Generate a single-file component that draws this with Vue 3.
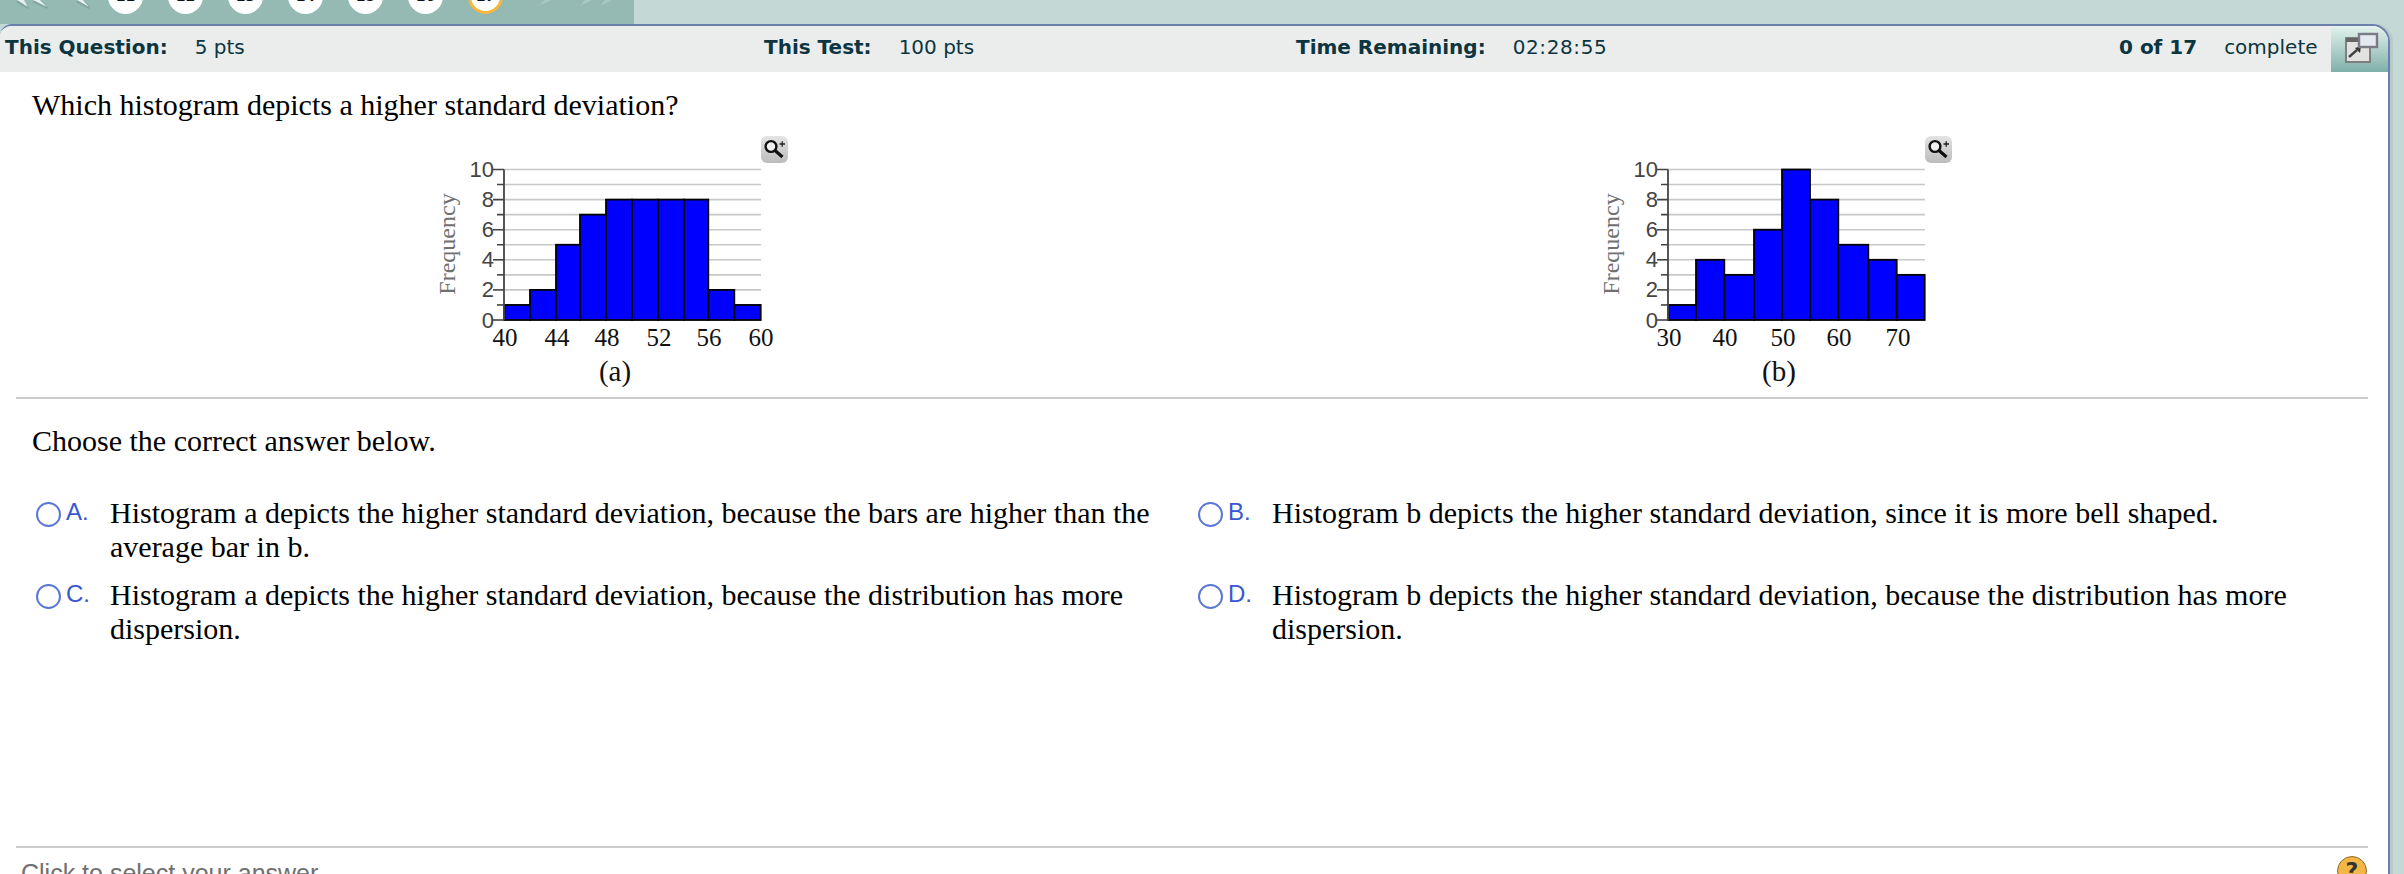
<script setup>
const tabs = [11, 12, 13, 14, 15, 16, 17]

const charts = [
  {
    letter: '(a)',
    letterX: 145,
    bars: [
      [34.3, 60, 1], [60, 86, 2], [86, 110, 5], [110, 136, 7], [136, 162, 8],
      [162, 188, 8], [188, 214, 8], [214, 238.3, 8], [238.3, 264.3, 2], [264.3, 290.7, 1]
    ],
    xLabels: [[35, '40'], [87, '44'], [137, '48'], [189, '52'], [239, '56'], [291, '60']]
  },
  {
    letter: '(b)',
    letterX: 145,
    bars: [
      [34.3, 62, 1], [62, 90.3, 4], [90.3, 120, 3], [120, 148, 6], [148, 176, 10],
      [176, 204.3, 8], [204.3, 234.3, 5], [234.3, 262.7, 4], [262.7, 290.7, 3]
    ],
    xLabels: [[35, '30'], [91, '40'], [149, '50'], [205, '60'], [264, '70']]
  }
]

const BASE = 190
const UNIT = 15.05
const yOf = v => BASE - v * UNIT
const gridVals = [1, 2, 3, 4, 5, 6, 7, 8, 9, 10]
const tickVals = [0, ...gridVals]
const yLabels = [0, 2, 4, 6, 8, 10]

const choices = [
  { key: 'A', text: 'Histogram a depicts the higher standard deviation, because the bars are higher than the average bar in b.' },
  { key: 'B', text: 'Histogram b depicts the higher standard deviation, since it is more bell shaped.' },
  { key: 'C', text: 'Histogram a depicts the higher standard deviation, because the distribution has more dispersion.' },
  { key: 'D', text: 'Histogram b depicts the higher standard deviation, because the distribution has more dispersion.' }
]
</script>

<template>
  <div class="page">
    <div class="tabs">
      <div class="tabs-dark">
        <svg class="arrows" width="108" height="14" viewBox="0 0 108 14">
          <path d="M19 0 L16 2 L28 9 L29 7 L24 0 Z M35 0 L32 2 L47 9 L48 7 L41 0 Z M79 0 L76 2 L89 9 L90 7 L84 0 Z" fill="#7fa59e" />
          <path d="M17 0 L24 0 L28 7 Z M33 0 L40 0 L47 7 Z M77 0 L83 0 L89 7 Z" fill="#e6efec" />
        </svg>
        <span v-for="t in tabs" :key="t" class="tab" :class="{ current: t === 17 }">{{ t }}</span>
        <svg class="arrows" width="106" height="14" viewBox="528 0 106 14">
          <path d="M545 0 L552 0 L538 6 Z M585 0 L592 0 L580 6 Z M605 0 L612 0 L600 6 Z" fill="#a9c8c2" />
        </svg>
      </div>
    </div>

    <div class="frame">
      <header class="status">
        <div class="stat stat-q"><b>This Question:</b><span>5 pts</span></div>
        <div class="stat"><b>This Test:</b><span>100 pts</span></div>
        <div class="stat"><b>Time Remaining:</b><span class="clock">02:28:55</span></div>
        <div class="stat stat-c"><b>0 of 17</b><span>complete</span></div>
        <div class="expand">
          <svg width="36" height="32" viewBox="0 0 36 32">
            <rect x="3" y="6" width="24" height="24" fill="#e2e2e0" stroke="#777" stroke-width="1.8" />
            <rect x="3" y="6" width="24" height="4" fill="#666" />
            <path d="M6 25 L14 18" stroke="#444" stroke-width="2.4" />
            <path d="M12 16 L18 14 L17 21 Z" fill="#333" />
            <rect x="16" y="2" width="18" height="13" fill="#e4e8f0" stroke="#7b7b86" stroke-width="2.4" />
          </svg>
        </div>
      </header>

      <main class="body">
        <p class="question">Which histogram depicts a higher standard deviation?</p>

        <div class="charts">
          <figure v-for="c in charts" :key="c.letter" class="chart">
            <svg width="320" height="260" viewBox="0 0 320 260">
              <line v-for="g in gridVals" :key="g" x1="34" x2="291" :y1="yOf(g)" :y2="yOf(g)" stroke="#c8c8c8" stroke-width="1.6" />
              <rect
                v-for="(b, i) in c.bars"
                :key="i"
                :x="b[0]"
                :y="yOf(b[2])"
                :width="b[1] - b[0]"
                :height="b[2] * UNIT"
                fill="#0000ff"
                stroke="#000"
                stroke-width="1.8"
              />
              <line x1="34" x2="34" :y1="yOf(10)" :y2="BASE" stroke="#444" stroke-width="1.8" />
              <line v-for="g in tickVals" :key="'t' + g" :x1="g % 2 ? 27 : 23" x2="34" :y1="yOf(g)" :y2="yOf(g)" stroke="#444" stroke-width="1.6" />
              <text v-for="v in yLabels" :key="v" x="24" :y="yOf(v) + 7.5" text-anchor="end" class="ylab">{{ v }}</text>
              <text transform="translate(-15 114) rotate(-90)" text-anchor="middle" class="ytitle">Frequency</text>
              <text v-for="l in c.xLabels" :key="l[1]" :x="l[0]" y="216" text-anchor="middle" class="xlab">{{ l[1] }}</text>
              <text :x="c.letterX" y="251" text-anchor="middle" class="letter">{{ c.letter }}</text>
            </svg>
            <span class="zoom-btn">
              <svg width="27" height="27" viewBox="0 0 27 27">
                <circle cx="10" cy="10.5" r="5.4" fill="#f0f0f0" stroke="#111" stroke-width="2.4" />
                <path d="M14 14.5 L21.5 21" stroke="#111" stroke-width="3.2" />
                <path d="M18.5 8 H24 M21.2 5.3 V10.7" stroke="#222" stroke-width="1.3" />
              </svg>
            </span>
          </figure>
        </div>

        <hr class="rule" />

        <p class="prompt">Choose the correct answer below.</p>

        <div class="choices">
          <div v-for="c in choices" :key="c.key" class="choice">
            <span class="radio"></span>
            <span class="key">{{ c.key }}.</span>
            <span class="text">{{ c.text }}</span>
          </div>
        </div>

        <div class="foot">
          <span class="hint">Click to select your answer.</span>
          <span class="help">?</span>
        </div>
      </main>
    </div>
  </div>
</template>

<style>
html, body { margin: 0; overflow: hidden; }
</style>

<style scoped>
.page {
  width: 2404px;
  height: 874px;
  overflow: hidden;
  background: #c4d8d6;
  display: flex;
  flex-direction: column;
}
.tabs { height: 24px; flex: none; overflow: hidden; }
.tabs-dark {
  width: 634px;
  height: 24px;
  background: #95bab3;
  display: flex;
  align-items: flex-end;
  padding-bottom: 10px;
  box-sizing: border-box;
}
.arrows { flex: none; align-self: flex-start; display: block; }
.tab {
  flex: none;
  width: 35px;
  height: 35px;
  margin-right: 25px;
  border-radius: 50%;
  background: #fff;
  box-sizing: border-box;
  font: bold 14px/34px "DejaVu Sans", sans-serif;
  text-align: center;
  color: #111;
}
.tab.current { border: 3px solid #f6b93b; line-height: 28px; }
.frame {
  width: 2390px;
  flex: 1;
  min-height: 0;
  box-sizing: border-box;
  background: #fff;
  border-style: solid;
  border-color: #6b80ad;
  border-width: 2px 2px 0 0;
  border-top-left-radius: 12px;
  border-top-right-radius: 18px;
  overflow: hidden;
  box-shadow: 3px 0 0 #b6cac8;
}
.status {
  height: 46px;
  background: #ebeded;
  display: grid;
  grid-template-columns: 764px 532px 823px 1fr 60px;
  align-items: center;
  font: 20px "DejaVu Sans", sans-serif;
  color: #0c3540;
}
.stat { display: flex; gap: 27px; white-space: nowrap; padding-bottom: 5px; }
.stat-q { padding-left: 5px; }
.stat-c { justify-content: flex-end; padding-right: 13px; }
.clock { letter-spacing: 0.6px; }
.expand {
  align-self: stretch;
  background: linear-gradient(#e3f2ee, #7fb0a7);
  display: flex;
  align-items: center;
  justify-content: center;
}
.expand svg { margin-top: -2px; }
.body {
  padding-left: 16px;
  font-family: "Liberation Serif", serif;
  color: #000;
}
.question { margin: 16px 0 0 16px; font-size: 30px; line-height: 34px; }
.charts {
  display: grid;
  grid-template-columns: 1164px 1fr;
  height: 240px;
  margin-top: 8px;
}
.chart { margin: 0 0 0 454px; position: relative; width: 320px; height: 240px; }
.chart svg { display: block; overflow: visible; }
.zoom-btn {
  position: absolute;
  left: 291px;
  top: 6px;
  width: 27px;
  height: 27px;
  border-radius: 6px;
  background: linear-gradient(#e4e4e4, #bcbcbc);
}
.ylab { font: 22px "Liberation Sans", sans-serif; fill: #444; }
.ytitle { font: 24px "Liberation Serif", serif; fill: #707070; }
.xlab { font: 25px "Liberation Serif", serif; fill: #111; }
.letter { font: 29px "Liberation Serif", serif; fill: #111; }
.rule { border: 0; height: 2px; background: #cdcdcd; margin: 27px 20px 0 0; }
.prompt { margin: 25px 0 0 16px; font-size: 30px; line-height: 34px; }
.choices {
  margin-top: 38px;
  display: grid;
  grid-template-columns: 1162px 1fr;
  row-gap: 14px;
  padding-left: 16px;
  height: 350px;
  align-content: start;
}
.choice { position: relative; padding-left: 78px; padding-right: 30px; font-size: 30px; line-height: 34px; }
.radio {
  position: absolute;
  left: 4px;
  top: 6px;
  width: 25px;
  height: 25px;
  box-sizing: border-box;
  border: 2px solid #5a77d8;
  border-radius: 50%;
}
.key { position: absolute; left: 34px; top: 2px; font: 24px "Liberation Sans", sans-serif; color: #3a57cf; }
.foot {
  border-top: 2px solid #cdcdcd;
  margin-right: 20px;
  padding: 11px 0 0 5px;
  display: flex;
  justify-content: space-between;
  align-items: flex-start;
  font: 25px "Liberation Sans", sans-serif;
  color: #707070;
}
.help {
  width: 30px;
  height: 30px;
  border-radius: 50%;
  background: #f3b647;
  border: 1px solid #8d6a2a;
  box-sizing: border-box;
  text-align: center;
  color: #333;
  font: bold 22px/28px "DejaVu Sans", sans-serif;
  margin-top: -3px;
  margin-right: 1px;
}
</style>
